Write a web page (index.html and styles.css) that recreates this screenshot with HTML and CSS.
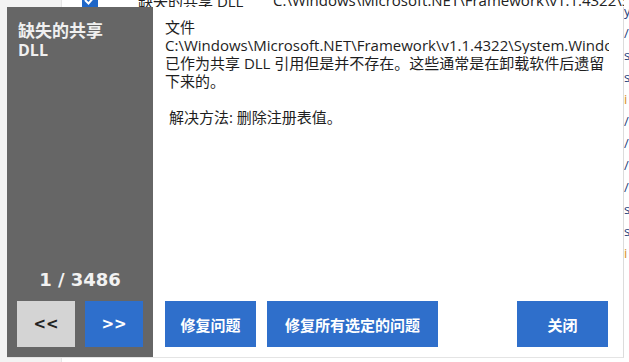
FILE: index.html
```html
<!DOCTYPE html>
<html lang="zh-CN">
<head>
<meta charset="utf-8">
<title>缺失的共享 DLL</title>
<link rel="stylesheet" href="styles.css">
</head>
<body>
<div class="app">
  <div class="side"></div>
  <div class="list">
    <div class="row">
      <span class="check">
        <svg width="16" height="16" viewBox="0 0 16 16"><rect x="0" y="0" width="16" height="16" fill="#1e66c8"/><path d="M3 8 L6.5 11.5 L13 4" fill="none" stroke="#fff" stroke-width="2"/></svg>
      </span>
      <span class="name">缺失的共享 DLL</span>
      <span class="path">C:\Windows\Microsoft.NET\Framework\v1.1.4322\System.Windows.Forms.dll</span>
    </div>
  </div>
  <div class="edge">
    <span class="b">y</span><span class="b">/</span><span class="b">s</span><span class="b">s</span><span class="o">i</span><span class="b">/</span><span class="b">/</span><span class="b">/</span><span class="b">/</span><span class="b">s</span><span class="b">s</span><span class="o">i</span>
  </div>
</div>

<div class="dialog">
  <div class="panel">
    <div class="title">缺失的共享<br><span class="dll">DLL</span></div>
    <div class="counter">1 / 3486</div>
    <div class="nav">
      <button class="nbtn prev">&lt;&lt;</button>
      <button class="nbtn next">&gt;&gt;</button>
    </div>
  </div>
  <div class="main">
    <div class="msg">
      <p>文件</p>
      <p class="nowrap">C:\Windows\Microsoft.NET\Framework\v1.1.4322\System.Windows.Forms.dll</p>
      <p>已作为共享 DLL 引用但是并不存在。这些通常是在卸载软件后遗留下来的。</p>
      <p class="gap">&nbsp;解决方法: 删除注册表值。</p>
    </div>
    <div class="actions">
      <button class="btn w91">修复问题</button>
      <button class="btn w171">修复所有选定的问题</button>
      <button class="btn w91 close">关闭</button>
    </div>
  </div>
</div>
</body>
</html>
```
FILE: styles.css
```css
* { box-sizing: border-box; }
html, body { margin: 0; padding: 0; }
body {
  width: 629px;
  height: 362px;
  overflow: hidden;
  background: #fff;
  font-family: "Open Sans", "Noto Sans CJK SC", sans-serif;
  position: relative;
}
.app {
  display: flex;
  height: 362px;
}
.side {
  width: 62px;
  flex-shrink: 0;
  background: #f3f3f3;
  border-right: 1px solid #e6e6e6;
}
.list {
  flex: 1;
  overflow: hidden;
}
.row {
  display: flex;
  align-items: center;
  height: 18px;
  margin-top: -9px;
  font-size: 15px;
  color: #222;
  white-space: nowrap;
}
.check { margin-left: 20px; width: 16px; height: 16px; flex-shrink: 0; }
.check svg { display: block; }
.name { margin-left: 40px; width: 135px; flex-shrink: 0; }
.path { flex-shrink: 0; }
.edge {
  width: 5px;
  flex-shrink: 0;
  display: flex;
  flex-direction: column;
  overflow: hidden;
  font-size: 13px;
  line-height: 22px;
  font-family: "Open Sans", sans-serif;
}
.edge .b { color: #1f3e7a; }
.edge .o { color: #d8902a; }

.dialog {
  position: absolute;
  left: 7px;
  top: 7px;
  width: 617px;
  height: 351px;
  display: flex;
  background: #fff;
  border-right: 1px solid #dcdcdc;
  border-bottom: 1px solid #e4e4e4;
}
.panel {
  width: 146px;
  flex-shrink: 0;
  background: #666666;
  display: flex;
  flex-direction: column;
  padding: 10px;
}
.title {
  color: #f0f0f0;
  font-family: "Noto Sans CJK SC", sans-serif;
  font-weight: bold;
  font-size: 17px;
  line-height: 19px;
  padding-left: 1px;
  padding-top: 3px;
}
.title .dll {
  font-family: "Open Sans", sans-serif;
  font-weight: bold;
  font-size: 16px;
}
.counter {
  margin-top: auto;
  text-align: center;
  color: #f2f2f2;
  font-family: "DejaVu Sans", sans-serif;
  font-weight: bold;
  font-size: 18px;
  line-height: 20px;
  margin-bottom: 11px;
}
.nav {
  display: flex;
  gap: 10px;
}
.nbtn {
  width: 58px;
  height: 46px;
  border: none;
  font-family: "DejaVu Sans", sans-serif;
  font-weight: bold;
  font-size: 15px;
  padding: 0;
}
.prev { background: #d4d4d4; color: #222; }
.next { background: #2e6fcc; color: #fff; }

.main {
  flex: 1;
  display: flex;
  flex-direction: column;
  padding: 11px 14px 10px 12px;
  overflow: hidden;
}
.msg {
  font-size: 15px;
  line-height: 18px;
  color: #1e1e1e;
  font-family: "Open Sans", "Noto Sans CJK SC", sans-serif;
  flex: 1;
  overflow: hidden;
}
.msg p { margin: 0; }
.msg .nowrap { white-space: nowrap; overflow: hidden; }
.msg .gap { margin-top: 18px; }
.actions {
  display: flex;
  gap: 11px;
}
.btn {
  height: 46px;
  border: none;
  background: #2f6fcb;
  color: #fff;
  font-family: "Noto Sans CJK SC", sans-serif;
  font-weight: bold;
  font-size: 15px;
  padding: 0;
}
.w91 { width: 91px; }
.w171 { width: 171px; }
.close { margin-left: auto; margin-right: 1px; }
```
